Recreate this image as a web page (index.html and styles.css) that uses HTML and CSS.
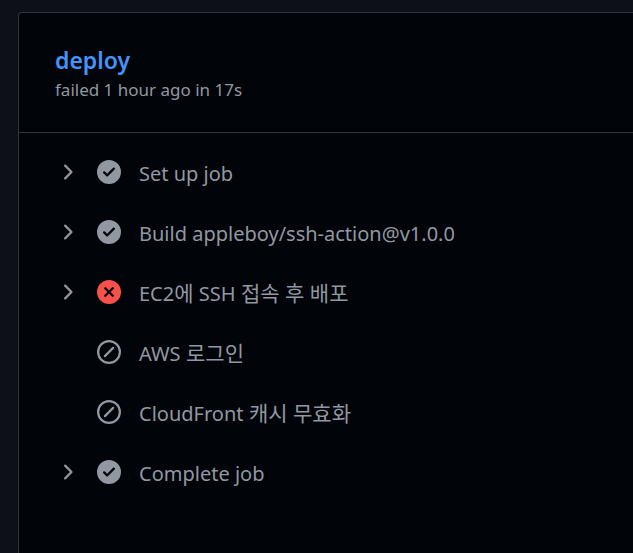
FILE: index.html
```html
<!DOCTYPE html>
<html lang="ko">
<head>
    <meta charset="UTF-8">
    <meta name="viewport" content="width=device-width, initial-scale=1.0">
    <title>deploy</title>
    <link rel="stylesheet" href="styles.css">
</head>
<body>
    <!-- shared icons -->
    <svg class="sprite" aria-hidden="true">
        <symbol id="chevron" viewBox="0 0 16 16">
            <path d="M6.22 3.22a.75.75 0 0 1 1.06 0l4.25 4.25a.75.75 0 0 1 0 1.06l-4.25 4.25a.75.75 0 0 1-1.06-1.06L9.94 8 6.22 4.28a.75.75 0 0 1 0-1.06Z"/>
        </symbol>
        <symbol id="success" viewBox="0 0 16 16">
            <path d="M8 16A8 8 0 1 1 8 0a8 8 0 0 1 0 16Zm3.78-9.72a.75.75 0 0 0-1.06-1.06L6.75 9.19 5.28 7.72a.75.75 0 0 0-1.06 1.06l2 2a.75.75 0 0 0 1.06 0Z"/>
        </symbol>
        <symbol id="failure" viewBox="0 0 16 16">
            <path d="M8 16A8 8 0 1 1 8 0a8 8 0 0 1 0 16ZM6.03 4.97a.75.75 0 0 0-1.06 1.06L6.94 8 4.97 9.97a.75.75 0 1 0 1.06 1.06L8 9.06l1.97 1.97a.75.75 0 1 0 1.06-1.06L9.06 8l1.97-1.97a.75.75 0 1 0-1.06-1.06L8 6.94Z"/>
        </symbol>
        <symbol id="skipped" viewBox="0 0 16 16">
            <path d="M8 0a8 8 0 1 1 0 16A8 8 0 0 1 8 0ZM1.5 8a6.5 6.5 0 1 0 13 0 6.5 6.5 0 0 0-13 0Zm9.78-2.22-5.5 5.5a.75.75 0 0 1-1.06-1.06l5.5-5.5a.75.75 0 0 1 1.06 1.06Z"/>
        </symbol>
    </svg>

    <main class="job">
        <header class="job-header">
            <h2 class="job-title"><a href="#">deploy</a></h2>
            <p class="job-info">failed 1 hour ago in 17s</p>
        </header>
        <ul class="steps">
            <li>
                <button type="button" class="step">
                    <svg class="icon"><use href="#chevron"/></svg>
                    <svg class="icon"><use href="#success"/></svg>
                    <span class="step-name">Set up job</span>
                </button>
            </li>
            <li>
                <button type="button" class="step">
                    <svg class="icon"><use href="#chevron"/></svg>
                    <svg class="icon"><use href="#success"/></svg>
                    <span class="step-name">Build appleboy/ssh-action@v1.0.0</span>
                </button>
            </li>
            <li>
                <button type="button" class="step">
                    <svg class="icon"><use href="#chevron"/></svg>
                    <svg class="icon icon-failure"><use href="#failure"/></svg>
                    <span class="step-name">EC2<span class="hangul">에</span> SSH<span class="hangul"> 접속 후 배포</span></span>
                </button>
            </li>
            <li>
                <button type="button" class="step" disabled>
                    <svg class="icon"></svg>
                    <svg class="icon"><use href="#skipped"/></svg>
                    <span class="step-name">AWS<span class="hangul"> 로그인</span></span>
                </button>
            </li>
            <li>
                <button type="button" class="step" disabled>
                    <svg class="icon"></svg>
                    <svg class="icon"><use href="#skipped"/></svg>
                    <span class="step-name">CloudFront<span class="hangul"> 캐시 무효화</span></span>
                </button>
            </li>
            <li>
                <button type="button" class="step">
                    <svg class="icon"><use href="#chevron"/></svg>
                    <svg class="icon"><use href="#success"/></svg>
                    <span class="step-name">Complete job</span>
                </button>
            </li>
        </ul>
    </main>
</body>
</html>
```

FILE: styles.css
```css
* {
    box-sizing: border-box;
}
body {
    display: flex;
    min-height: 100vh;
    margin: 0;
    padding: 12px 0 0 18px;
    font-family: "Noto Sans", "Noto Sans CJK KR", sans-serif;
    background-color: #0d1117;
    color: #9198a1;
}
.sprite {
    display: none;
}
.job {
    flex: 1;
    background-color: #010409;
    border: 1px solid #30363d;
    border-width: 1px 0 0 1px;
    border-top-left-radius: 4px;
}
.job-header {
    padding: 32px 36px 28px;
    border-bottom: 1px solid #30363d;
}
.job-title {
    margin: 0;
    font-size: 23px;
    font-weight: 600;
    line-height: 31px;
}
.job-title a {
    color: #4493f8;
    text-decoration: none;
}
.job-info {
    margin: 0;
    font-size: 17px;
    line-height: 28px;
}
.steps {
    margin: 0;
    padding: 9px 12px;
    list-style: none;
}
.step {
    display: flex;
    align-items: center;
    gap: 18px;
    width: 100%;
    height: 60px;
    padding: 0 24px;
    border: none;
    background: none;
    color: inherit;
    font-family: inherit;
    font-size: 20px;
    line-height: 30px;
    text-align: left;
    cursor: pointer;
}
.step:disabled {
    color: inherit;
    cursor: default;
}
.step-name {
    padding-top: 3px;
}
.hangul {
    font-size: 21px;
}
.icon {
    flex: none;
    width: 24px;
    height: 24px;
    fill: currentColor;
}
.icon-failure {
    color: #f85149;
}
```
